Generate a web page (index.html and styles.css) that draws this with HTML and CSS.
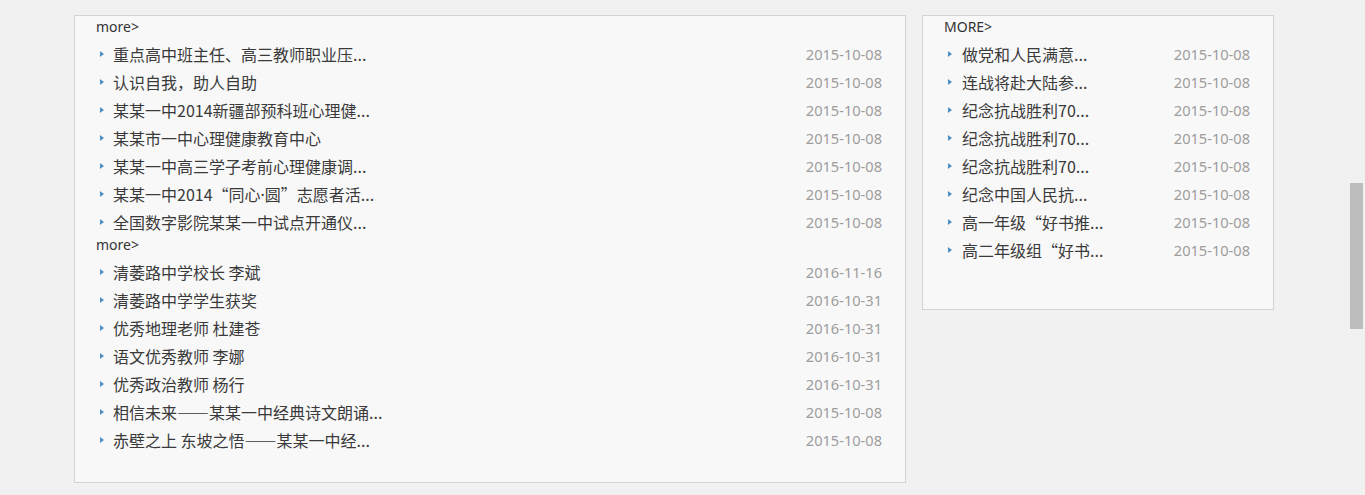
FILE: index.html
```html
<!DOCTYPE html>
<html lang="zh-CN">
<head>
<meta charset="utf-8">
<title>新闻列表</title>
<link rel="stylesheet" href="styles.css">
</head>
<body>
<div class="page">
  <div class="box box-main">
    <section class="sect">
      <div class="more">more&gt;</div>
      <ul class="list">
        <li class="item"><span class="title">重点高中班主任、高三教师职业压...</span><span class="date">2015-10-08</span></li>
        <li class="item"><span class="title">认识自我，助人自助</span><span class="date">2015-10-08</span></li>
        <li class="item"><span class="title">某某一中2014新疆部预科班心理健...</span><span class="date">2015-10-08</span></li>
        <li class="item"><span class="title">某某市一中心理健康教育中心</span><span class="date">2015-10-08</span></li>
        <li class="item"><span class="title">某某一中高三学子考前心理健康调...</span><span class="date">2015-10-08</span></li>
        <li class="item"><span class="title">某某一中2014“同心<span class="mid">·</span>圆”志愿者活...</span><span class="date">2015-10-08</span></li>
        <li class="item"><span class="title">全国数字影院某某一中试点开通仪...</span><span class="date">2015-10-08</span></li>
      </ul>
    </section>
    <section class="sect">
      <div class="more">more&gt;</div>
      <ul class="list">
        <li class="item"><span class="title">清萎路中学校长 李斌</span><span class="date">2016-11-16</span></li>
        <li class="item"><span class="title">清萎路中学学生获奖</span><span class="date">2016-10-31</span></li>
        <li class="item"><span class="title">优秀地理老师 杜建苍</span><span class="date">2016-10-31</span></li>
        <li class="item"><span class="title">语文优秀教师 李娜</span><span class="date">2016-10-31</span></li>
        <li class="item"><span class="title">优秀政治教师 杨行</span><span class="date">2016-10-31</span></li>
        <li class="item"><span class="title">相信未来——某某一中经典诗文朗诵...</span><span class="date">2015-10-08</span></li>
        <li class="item"><span class="title">赤壁之上 东坡之悟——某某一中经...</span><span class="date">2015-10-08</span></li>
      </ul>
    </section>
  </div>
  <div class="box box-side">
    <section class="sect">
      <div class="more">MORE&gt;</div>
      <ul class="list">
        <li class="item"><span class="title">做党和人民满意...</span><span class="date">2015-10-08</span></li>
        <li class="item"><span class="title">连战将赴大陆参...</span><span class="date">2015-10-08</span></li>
        <li class="item"><span class="title">纪念抗战胜利70...</span><span class="date">2015-10-08</span></li>
        <li class="item"><span class="title">纪念抗战胜利70...</span><span class="date">2015-10-08</span></li>
        <li class="item"><span class="title">纪念抗战胜利70...</span><span class="date">2015-10-08</span></li>
        <li class="item"><span class="title">纪念中国人民抗...</span><span class="date">2015-10-08</span></li>
        <li class="item"><span class="title">高一年级“好书推...</span><span class="date">2015-10-08</span></li>
        <li class="item"><span class="title">高二年级组“好书...</span><span class="date">2015-10-08</span></li>
      </ul>
    </section>
  </div>
</div>
<div class="scroll-thumb"></div>
</body>
</html>
```
FILE: styles.css
```css
html, body {
  margin: 0;
  padding: 0;
}
body {
  background: #f1f1f1;
  font-family: "Noto Sans", "Noto Sans CJK SC", sans-serif;
  color: #333;
  height: 495px;
  overflow: hidden;
}
.page {
  display: flex;
  align-items: flex-start;
  gap: 16px;
  padding: 15px 0 0 74px;
}
.box {
  box-sizing: border-box;
  background: #f8f8f8;
  border: 1px solid #d3d3d3;
  padding: 0 23px 0 21px;
}
.box-main {
  width: 832px;
  height: 468px;
}
.box-side {
  width: 352px;
  height: 295px;
}
.more {
  height: 22px;
  line-height: 22px;
  font-size: 14px;
  color: #333;
}
.list {
  list-style: none;
  margin: 0;
  padding: 0;
}
.item {
  display: flex;
  align-items: center;
  height: 28px;
  box-sizing: border-box;
  padding: 5px 0 1px 4px;
  line-height: 22px;
}
.item::before {
  content: "";
  flex: none;
  width: 0;
  height: 0;
  border-left: 4px solid #4f8fc4;
  border-top: 3.5px solid transparent;
  border-bottom: 3.5px solid transparent;
  margin-right: 9px;
}
.title {
  flex: 1;
  font-size: 16px;
  color: #3a3a3a;
  font-family: "Noto Sans CJK SC", sans-serif;
  white-space: nowrap;
}
.mid {
  font-family: "Noto Sans", sans-serif;
}
.date {
  flex: none;
  font-size: 14.6px;
  color: #9d9d9d;
}
.box-side .item::before {
  margin-right: 10px;
}
.scroll-thumb {
  position: fixed;
  left: 1350px;
  top: 183px;
  width: 13px;
  height: 146px;
  background: #bcbcbc;
}
```
